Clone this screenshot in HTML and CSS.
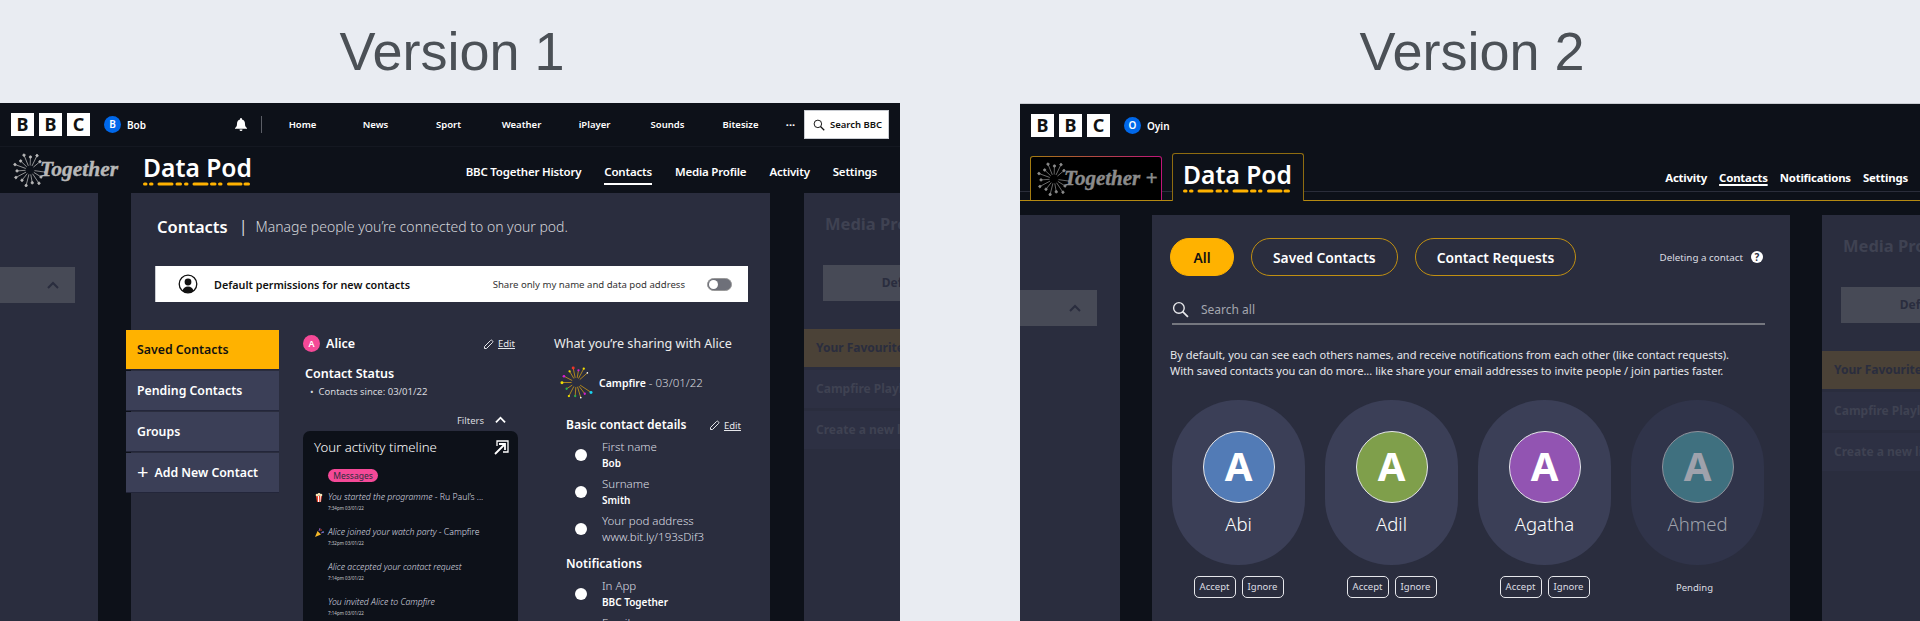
FILE: index.html
```html
<!DOCTYPE html>
<html lang="en">
<head>
<meta charset="utf-8">
<title>BBC Together Data Pod versions</title>
<link rel="stylesheet" href="styles.css">
</head>
<body>
<svg class="defs" width="0" height="0" aria-hidden="true">
  <defs>
    <g id="ray"><line x1="4.5" y1="0" x2="16" y2="0"/><circle cx="16" cy="0" r="1.2"/></g>
    <g id="rayb"><line x1="4.5" y1="0" x2="13" y2="0"/><circle cx="13" cy="0" r="1.2"/></g>
    <g id="burst">
      <use href="#ray" transform="translate(17 17) rotate(8)"/>
      <use href="#rayb" transform="translate(17 17) rotate(32)"/>
      <use href="#ray" transform="translate(17 17) rotate(56)"/>
      <use href="#rayb" transform="translate(17 17) rotate(80)"/>
      <use href="#ray" transform="translate(17 17) rotate(104)"/>
      <use href="#rayb" transform="translate(17 17) rotate(128)"/>
      <use href="#ray" transform="translate(17 17) rotate(152)"/>
      <use href="#rayb" transform="translate(17 17) rotate(176)"/>
      <use href="#ray" transform="translate(17 17) rotate(200)"/>
      <use href="#rayb" transform="translate(17 17) rotate(224)"/>
      <use href="#ray" transform="translate(17 17) rotate(248)"/>
      <use href="#rayb" transform="translate(17 17) rotate(272)"/>
      <use href="#ray" transform="translate(17 17) rotate(296)"/>
      <use href="#rayb" transform="translate(17 17) rotate(320)"/>
    </g>
    <g id="dashes" fill="none" stroke="#ffb200" stroke-width="3" stroke-linecap="round">
      <path d="M1.5 2H3M7.500 2H9M16 2H29M34 2H37.500M42.500 2H44M51 2H64M68.500 2H72M76.500 2H78M85.500 2H98M102 2H105.500"/>
    </g>
    <g id="pencil" fill="none" stroke="currentColor" stroke-width="1">
      <path d="M1.500 8.500 7.500 2.500a1.200 1.200 0 0 1 1.700 0l.3.300a1.200 1.200 0 0 1 0 1.700L3.500 10.500H1.500z"/>
    </g>
    <g id="chev" fill="none" stroke="currentColor" stroke-width="2">
      <path d="M1 8 6 3l5 5"/>
    </g>
    <g id="lens" fill="none" stroke="currentColor" stroke-width="1.300">
      <circle cx="6.500" cy="6.500" r="5"/><path d="M10 10l5 5" stroke-width="1.600"/>
    </g>
  </defs>
</svg>

<div class="stage">
  <section class="version">
    <h1 class="version-title">Version 1</h1>
    <div class="frame">
      <header class="topbar">
        <div class="bbc"><span>B</span><span>B</span><span>C</span></div>
        <div class="user"><span class="user-dot">B</span><span class="user-name">Bob</span></div>
        <div class="global">
          <svg class="bell" viewBox="0 0 12 13" width="12" height="13"><path fill="#fff" d="M6 0a1 1 0 0 1 1 1v.6c2 .5 3 2.100 3 4.100 0 2 .5 3.300 2 4.300v.8H0V10c1.500-1 2-2.300 2-4.300 0-2 1-3.600 3-4.100V1a1 1 0 0 1 1-1zM4.500 11.500h3a1.500 1.500 0 0 1-3 0z"/></svg>
          <span class="sep"></span>
          <nav class="gnav">
            <span>Home</span><span>News</span><span>Sport</span><span>Weather</span><span>iPlayer</span><span>Sounds</span><span>Bitesize</span>
          </nav>
          <span class="more">···</span>
          <div class="search-btn"><svg viewBox="0 0 16 16" width="12" height="12"><use href="#lens"/></svg><span>Search BBC</span></div>
        </div>
      </header>
      <div class="subbar">
        <div class="together">
          <svg class="burst" viewBox="0 0 34 34" width="34" height="34"><use href="#burst"/></svg>
          <span class="together-word">Together</span>
        </div>
        <div class="datapod">
          <span class="datapod-word">Data Pod</span>
          <svg class="dash" viewBox="0 0 107 4" width="107" height="4"><use href="#dashes"/></svg>
        </div>
        <nav class="subnav">
          <span>BBC Together History</span><span class="is-current">Contacts</span><span>Media Profile</span><span>Activity</span><span>Settings</span>
        </nav>
      </div>
      <div class="panels">
        <aside class="side-left">
          <div class="ghost-box"><svg viewBox="0 0 12 11" width="12" height="11"><use href="#chev"/></svg></div>
        </aside>
        <main class="main one">
          <div class="page-head"><strong>Contacts</strong><span class="pipe">|</span><span class="page-sub">Manage people you’re connected to on your pod.</span></div>
          <div class="perm">
            <svg class="perm-icon" viewBox="0 0 20 20" width="20" height="20"><circle cx="10" cy="10" r="8.800" fill="none" stroke="#111" stroke-width="1.300"/><circle cx="10" cy="8" r="3.400" fill="#111"/><path fill="#111" d="M4.500 17c.5-3 2.700-4.500 5.500-4.500s5 1.500 5.500 4.500c-3 2.300-8 2.300-11 0z"/></svg>
            <strong>Default permissions for new contacts</strong>
            <span class="perm-note">Share only my name and data pod address</span>
            <span class="toggle"><i></i></span>
          </div>
          <div class="contact-body">
            <nav class="side-menu">
              <span class="menu-item is-active">Saved Contacts</span>
              <span class="menu-item">Pending Contacts</span>
              <span class="menu-item">Groups</span>
              <span class="menu-item"><b class="plus">+</b>Add New Contact</span>
            </nav>
            <div class="alice">
              <div class="alice-head">
                <span class="alice-dot">A</span><span class="alice-name">Alice</span>
                <span class="edit"><svg viewBox="0 0 11 12" width="11" height="12"><use href="#pencil"/></svg><u>Edit</u></span>
              </div>
              <h3 class="status-title">Contact Status</h3>
              <p class="status-item">•&nbsp; Contacts since: 03/01/22</p>
              <div class="filters"><span>Filters</span><svg viewBox="0 0 12 11" width="11" height="10"><use href="#chev"/></svg></div>
              <div class="timeline">
                <div class="timeline-head"><span>Your activity timeline</span>
                  <svg viewBox="0 0 15 15" width="15" height="15" fill="none" stroke="#fff" stroke-width="1.300"><path d="M3 6V1h11v11H9"/><path d="M1 14 10 5M5 4h6v6" stroke-width="1.800"/></svg>
                </div>
                <span class="pill-msg">Messages</span>
                <div class="entry">
                  <svg class="entry-icon" viewBox="0 0 8 9" width="8" height="9"><path fill="#e8452e" d="M1 3h6L6 9H2z"/><path fill="#fff" d="M3 3h1v6H3zM5 3h.8L5.400 9H4.800z"/><circle cx="2" cy="2" r="1.300" fill="#f7e6b5"/><circle cx="4" cy="1.500" r="1.400" fill="#f7e6b5"/><circle cx="6" cy="2" r="1.300" fill="#f7e6b5"/></svg>
                  <p><i>You started the programme</i> - Ru Paul’s ...</p><small>7:34pm 03/01/22</small>
                </div>
                <div class="entry">
                  <svg class="entry-icon" viewBox="0 0 9 9" width="9" height="9"><path fill="#f4b829" d="M0 9l2.500-6 3.500 3.500z"/><circle cx="6" cy="2" r=".8" fill="#e8452e"/><circle cx="8" cy="4" r=".8" fill="#4aa3df"/><path stroke="#9a6cd1" stroke-width=".8" d="M4 3l1-3M6 5l3-1"/></svg>
                  <p><i>Alice joined your watch party</i> - Campfire</p><small>7:32pm 03/01/22</small>
                </div>
                <div class="entry"><p><i>Alice accepted your contact request</i></p><small>7:14pm 03/01/22</small></div>
                <div class="entry entry-tight"><p><i>You invited Alice to Campfire</i></p><small>7:14pm 03/01/22</small></div>
              </div>
            </div>
            <div class="sharing">
              <h3 class="sharing-title">What you’re sharing with Alice</h3>
              <div class="campfire">
                <svg viewBox="88 137 100 100" width="33" height="33" fill="none" stroke="#c8971a" stroke-width="2.500">
                  <path d="M134 173 128 143M130 175 117 153M140 173 144 150M144 175 160 145M148 178 171 158M125 181 100 168M123 187H94M125 195 108 206M130 199 115 228M136 201 134 228M141 200 151 233M145.500 198 163 221M149 195 182 217"/>
                  <g stroke="none"><circle cx="128" cy="143" r="4.500" fill="#f0342a"/><circle cx="117" cy="153" r="3.500" fill="#f0e000"/><circle cx="144" cy="150" r="3.500" fill="#d81fd0"/><circle cx="160" cy="145" r="3.500" fill="#f0e000"/><circle cx="171" cy="158" r="2.500" fill="#fff"/><circle cx="100" cy="168" r="4" fill="#d81fd0"/><circle cx="94" cy="188" r="4.500" fill="#f0e000"/><circle cx="108" cy="206" r="3.500" fill="#2bb24c"/><circle cx="115" cy="228" r="3.500" fill="#f0e000"/><circle cx="134" cy="228" r="3.500" fill="#2bb24c"/><circle cx="151" cy="233" r="2.500" fill="#fff"/><circle cx="163" cy="221" r="3.500" fill="#d81fd0"/><circle cx="182" cy="217" r="4.500" fill="#19d3f0"/></g>
                </svg>
                <p><strong>Campfire</strong> - 03/01/22</p>
              </div>
              <div class="detail-head"><h4>Basic contact details</h4><span class="edit"><svg viewBox="0 0 11 12" width="11" height="12"><use href="#pencil"/></svg><u>Edit</u></span></div>
              <div class="detail"><span class="radio"></span><div><p>First name</p><b>Bob</b></div></div>
              <div class="detail"><span class="radio"></span><div><p>Surname</p><b>Smith</b></div></div>
              <div class="detail"><span class="radio"></span><div><p>Your pod address</p><p>www.bit.ly/193sDif3</p></div></div>
              <h4 class="notif-title">Notifications</h4>
              <div class="detail"><span class="radio"></span><div><p>In App</p><b>BBC Together</b></div></div>
              <div class="detail"><span class="radio"></span><div><p>Email</p><b>&nbsp;</b></div></div>
            </div>
          </div>
        </main>
        <aside class="side-right">
          <h2 class="ghost-title">Media Profile</h2>
          <div class="ghost-default">Default</div>
          <div class="ghost-row is-strip">Your Favourites</div>
          <div class="ghost-row">Campfire Playlist</div>
          <div class="ghost-row">Create a new list</div>
        </aside>
      </div>
    </div>
  </section>

  <section class="version">
    <h1 class="version-title">Version 2</h1>
    <div class="frame frame-two">
      <header class="topbar">
        <div class="bbc"><span>B</span><span>B</span><span>C</span></div>
        <div class="user"><span class="user-dot">O</span><span class="user-name">Oyin</span></div>
      </header>
      <div class="tabbar">
        <div class="tab-together">
          <svg class="burst" viewBox="0 0 34 34" width="34" height="34"><use href="#burst"/></svg>
          <span class="together-word">Together +</span>
        </div>
        <div class="tab-datapod">
          <span class="datapod-word">Data Pod</span>
          <svg class="dash" viewBox="0 0 107 4" width="107" height="4"><use href="#dashes"/></svg>
        </div>
        <nav class="tabnav">
          <span>Activity</span><span class="is-current">Contacts</span><span>Notifications</span><span>Settings</span>
        </nav>
      </div>
      <div class="panels panels-two">
        <aside class="side-left">
          <div class="ghost-box"><svg viewBox="0 0 12 11" width="12" height="11"><use href="#chev"/></svg></div>
        </aside>
        <main class="main two">
          <div class="pills">
            <span class="pill is-on">All</span>
            <span class="pill">Saved Contacts</span>
            <span class="pill">Contact Requests</span>
            <span class="help">Deleting a contact<i>?</i></span>
          </div>
          <div class="searchline">
            <svg viewBox="0 0 16 16" width="17" height="17"><use href="#lens"/></svg>
            <span>Search all</span>
          </div>
          <p class="intro">By default, you can see each others names, and receive notifications from each other (like contact requests).<br>With saved contacts you can do more... like share your email addresses to invite people / join parties faster.</p>
          <div class="people">
            <div class="person">
              <div class="person-card"><span class="face blue">A</span><span class="person-name">Abi</span></div>
              <div class="actions"><span>Accept</span><span>Ignore</span></div>
            </div>
            <div class="person">
              <div class="person-card"><span class="face green">A</span><span class="person-name">Adil</span></div>
              <div class="actions"><span>Accept</span><span>Ignore</span></div>
            </div>
            <div class="person">
              <div class="person-card"><span class="face purple">A</span><span class="person-name">Agatha</span></div>
              <div class="actions"><span>Accept</span><span>Ignore</span></div>
            </div>
            <div class="person is-pending">
              <div class="person-card"><span class="face teal">A</span><span class="person-name">Ahmed</span></div>
              <div class="actions"><em>Pending</em></div>
            </div>
          </div>
        </main>
        <aside class="side-right">
          <h2 class="ghost-title">Media Profile</h2>
          <div class="ghost-default">Default</div>
          <div class="ghost-row is-strip">Your Favourites</div>
          <div class="ghost-row">Campfire Playlist</div>
          <div class="ghost-row">Create a new list</div>
        </aside>
      </div>
    </div>
  </section>
</div>
</body>
</html>
```

FILE: styles.css
```css
* { box-sizing: border-box; }
html, body { margin: 0; padding: 0; height: 621px; overflow: hidden; }
body { background: #e9ecf2; font-family: "Noto Sans", "Open Sans", sans-serif; color: #fff; }
h1, h2, h3, h4, p { margin: 0; font-weight: inherit; }
.defs { display: block; height: 0; }
#ray, #rayb { stroke: currentColor; stroke-width: .7; fill: currentColor; }

.stage { display: flex; gap: 120px; height: 621px; }
.version { width: 900px; display: flex; flex-direction: column; }
.version-title { height: 103px; text-align: center; font: 400 54px/103px "Liberation Sans", sans-serif; color: #4b5056; padding-left: 4px; }
.frame { width: 900px; height: 518px; background: #0d1119; overflow: hidden; display: flex; flex-direction: column; }
.frame-two { border-top: 1px solid #c9ccd2; }

/* top bar */
.topbar { height: 44px; flex: none; display: flex; align-items: center; padding: 0 11px; border-bottom: 1px solid #141821; }
.frame-two .topbar { height: 43px; border-bottom: 0; }
.bbc { display: flex; gap: 5px; }
.bbc span { width: 23px; height: 23px; background: #fff; color: #111; font: 700 18px/23px "Noto Sans", sans-serif; text-align: center; }
.user { display: flex; align-items: center; gap: 6px; margin-left: 14px; }
.user-dot { width: 17px; height: 17px; border-radius: 50%; background: #0068ea; font-size: 10px; font-weight: 600; line-height: 17px; text-align: center; }
.user-name { font-size: 10px; font-weight: 600; }
.global { margin-left: auto; display: flex; align-items: center; }
.bell { margin-right: 14px; }
.sep { width: 1px; height: 17px; background: #5b5e66; margin-right: 4px; }
.gnav { display: flex; }
.gnav span { width: 73px; text-align: center; font-size: 9.500px; font-weight: 600; }
.more { width: 27px; text-align: center; font-size: 11px; font-weight: 700; }
.search-btn { width: 85px; height: 29px; background: #fff; border: 1px solid #c9ccd2; color: #111; display: flex; align-items: center; gap: 5px; padding-left: 8px; font-size: 9.500px; font-weight: 600; white-space: nowrap; }

/* version 1 sub bar */
.subbar { height: 46px; flex: none; display: flex; padding-left: 13px; }
.together { width: 130px; display: flex; align-items: center; }
.burst { flex: none; margin-right: -7px; color: #b8b8b8; }
.together-word { font: italic 700 21.500px/1 "Liberation Serif", serif; color: #b8b8b8; white-space: nowrap; -webkit-text-stroke: .4px currentColor; }
.datapod { display: flex; flex-direction: column; padding-top: 6px; }
.datapod-word { font-size: 24.600px; font-weight: 600; line-height: 30px; white-space: nowrap; width: 107px; }
.dash { display: block; margin-top: -1px; }
.subnav { margin-left: auto; padding: 16px 23px 0 0; display: flex; gap: 23px; align-items: flex-start; }
.subnav span { font-size: 11.500px; letter-spacing: -.2px; font-weight: 600; line-height: 18px; padding-bottom: 2px; white-space: nowrap; }
.subnav .is-current { border-bottom: 2px solid #fff; }

/* panels */
.panels { flex: 1; display: flex; min-height: 0; }
.panels-two { margin-top: 14px; }
.side-left { width: 98px; flex: none; background: #2a2d3e; padding-top: 74px; }
.ghost-box { width: 75px; height: 36px; background: #474a56; color: #2a2d3e; display: flex; align-items: center; justify-content: flex-end; padding-right: 16px; }
.main { background: #2a2d3e; flex: none; width: 639px; margin: 0 34px 0 33px; }
.side-right { flex: 1; min-width: 0; background: #2a2d3e; overflow: hidden; padding-top: 20px; }
.panels-two .side-left { width: 100px; padding-top: 75px; }
.panels-two .ghost-box { width: 77px; }
.panels-two .main { width: 638px; margin: 0 32px; }
.ghost-title { font-size: 16.500px; font-weight: 700; line-height: 22px; color: #3f4252; padding-left: 21px; white-space: nowrap; }
.ghost-default { margin: 30px 0 28px 19px; width: 162px; height: 36px; line-height: 36px; background: #474a56; color: #2a2d3e; text-align: center; font-size: 12px; font-weight: 700; }
.ghost-row { height: 38px; line-height: 38px; margin-bottom: 3px; padding-left: 12px; background: #2d3043; color: #3f4252; font-size: 12px; font-weight: 700; white-space: nowrap; }
.ghost-row.is-strip { background: #4b4237; color: #2a2d3e; }

/* version 1 main */
.one { padding: 21px 0 0 24px; }
.page-head { display: flex; align-items: center; height: 24px; padding-left: 2px; }
.page-head strong { font-size: 16.500px; font-weight: 600; }
.pipe { margin: 0 8px 0 11px; font-size: 16px; color: #d8d9de; }
.page-sub { font-size: 14px; font-weight: 300; color: #d4d5da; white-space: nowrap; }
.perm { margin-top: 28px; width: 593px; height: 36px; background: #fff; color: #111; display: flex; align-items: center; padding-left: 22px; border-left: 1px solid #c9ccd2; }
.perm-icon { flex: none; margin-right: 16px; }
.perm strong { font-size: 10.800px; font-weight: 600; white-space: nowrap; }
.perm-note { margin-left: auto; font-size: 9.600px; color: #333; white-space: nowrap; }
.toggle { margin: 0 16px 0 22px; width: 25px; height: 13px; border-radius: 7px; background: #6e7079; padding: 1px; border: 1px solid #999; display: block; }
.toggle i { display: block; width: 9px; height: 9px; background: #fff; border-radius: 50%; }
.contact-body { display: flex; margin: 28px 0 0 -29px; }
.side-menu { width: 153px; flex: none; display: flex; flex-direction: column; gap: 2.500px; }
.menu-item { height: 38.500px; background: #3b3f57; display: flex; align-items: center; padding-left: 11px; font-size: 12.300px; font-weight: 600; white-space: nowrap; box-shadow: 0 1px 0 #23263a; }
.menu-item.is-active { background: #ffb200; color: #111; }
.plus { font-size: 20px; font-weight: 400; line-height: 1; margin-right: 6px; }
.alice { width: 215px; flex: none; margin-left: 24px; padding-top: 5px; }
.alice-head { height: 17px; display: flex; align-items: center; }
.alice-dot { width: 17px; height: 17px; border-radius: 50%; background: #f54997; font-size: 9px; font-weight: 600; line-height: 17px; text-align: center; margin-right: 6px; }
.alice-name { font-size: 12.500px; font-weight: 600; }
.edit { margin-left: auto; display: flex; align-items: center; gap: 4px; font-size: 9.500px; color: #e6e7eb; margin-right: 3px; }
.status-title { margin: 13px 0 0 2px; font-size: 12.500px; font-weight: 600; line-height: 18px; }
.status-item { margin: 2px 0 0 7px; font-size: 9.500px; line-height: 14px; color: #d8d9de; white-space: nowrap; }
.filters { margin-top: 14px; height: 14px; display: flex; justify-content: flex-end; align-items: center; gap: 11px; padding-right: 12px; font-size: 9.500px; color: #d8d9de; }
.filters svg { color: #fff; }
.timeline { margin-top: 4px; height: 200px; background: #0d1119; border-radius: 7px 7px 0 0; padding-top: 6px; }
.timeline-head { height: 20px; display: flex; align-items: center; justify-content: space-between; padding: 0 9px 0 11px; font-size: 13.200px; font-weight: 300; }
.pill-msg { display: block; margin: 12px 0 2px 25px; width: 50px; height: 13px; border-radius: 7px; background: #f54997; color: #2a2d3e; font-size: 8.500px; line-height: 13px; text-align: center; }
.entry { position: relative; height: 35px; padding: 6px 0 0 25px; }
.entry-tight { height: 32px; }
.entry-icon { position: absolute; left: 12px; top: 9px; }
.entry p { font-size: 8.700px; line-height: 14px; color: #dcdde2; font-weight: 300; white-space: nowrap; }
.entry small { display: block; font-size: 4.500px; line-height: 8px; color: #c8c9ce; }
.sharing { width: 190px; flex: none; margin-left: 36px; padding-top: 5px; }
.sharing-title { font-size: 12.600px; font-weight: 400; line-height: 18px; white-space: nowrap; color: #eceded; }
.campfire { margin: 13px 0 0 6px; display: flex; align-items: center; gap: 6px; font-size: 11.500px; font-weight: 300; color: #d8d9de; white-space: nowrap; }
.campfire strong { font-size: 10.500px; font-weight: 600; color: #fff; }
.detail-head { margin: 17px 0 0 12px; width: 175px; display: flex; align-items: center; height: 18px; }
.detail-head h4, .notif-title { font-size: 12.100px; font-weight: 600; white-space: nowrap; line-height: 18px; }
.detail-head .edit { margin-right: 0; }
.notif-title { margin: 10px 0 0 12px; }
.detail { display: flex; align-items: center; gap: 15px; margin: 5px 0 0 21px; }
.detail p { font-size: 11.500px; font-weight: 300; line-height: 16px; color: #dcdde2; white-space: nowrap; }
.detail b { display: block; font-size: 10px; font-weight: 600; line-height: 16px; white-space: nowrap; }
.radio { width: 12px; height: 12px; border-radius: 50%; background: #fff; flex: none; }

/* version 2 tab bar */
.tabbar { height: 54px; flex: none; display: flex; align-items: flex-end; padding-left: 10px; border-bottom: 1px solid #b58a12; background: linear-gradient(#0d1119 44px, #2a2d3a 44px, #2a2d3a 45px, #0d1119 45px); }
.tab-together { width: 132px; height: 44px; margin-right: 10px; display: flex; align-items: center; padding-left: 6px; border: 1px solid transparent; border-bottom: 0; border-radius: 3px 3px 0 0; background: linear-gradient(#000, #000) padding-box, linear-gradient(90deg, #a47c10, #c0157a) border-box; }
.tab-together .burst, .tab-together .together-word { color: #8b8b8b; }
.tab-together .together-word { font-size: 21px; }
.tab-datapod { width: 132px; height: 48px; margin-bottom: -1px; padding: 6px 0 0 10px; border: 1px solid #8e6c10; border-bottom: 0; border-radius: 3px 3px 0 0; background: #0d1119; display: flex; flex-direction: column; }
.tab-datapod .dash { margin-top: -1px; }
.tabnav { margin-left: auto; padding-right: 12px; display: flex; gap: 12px; align-self: flex-start; margin-top: 22px; }
.tabnav span { font-size: 11.400px; letter-spacing: -.2px; font-weight: 700; line-height: 18px; white-space: nowrap; }
.tabnav .is-current { text-decoration: underline; text-decoration-thickness: 1.500px; text-underline-offset: 2px; }

/* version 2 main */
.two { padding: 23px 0 0 18px; }
.pills { display: flex; align-items: center; gap: 17px; padding-right: 27px; }
.pill { height: 38px; padding: 0 21px; border-radius: 19px; border: 1px solid #c08f12; display: flex; align-items: center; font-size: 13.800px; font-weight: 600; white-space: nowrap; }
.pill.is-on { background: #ffb200; border-color: #ffb200; color: #111; width: 64px; justify-content: center; padding: 0; }
.help { margin-left: auto; display: flex; align-items: center; gap: 8px; font-size: 9.800px; color: #dcdde2; white-space: nowrap; }
.help i { width: 12px; height: 12px; border-radius: 50%; background: #fff; color: #2a2d3e; font-size: 10px; font-weight: 700; font-style: normal; line-height: 12px; text-align: center; }
.searchline { margin: 20px 0 0 2px; width: 593px; height: 29px; display: flex; align-items: center; gap: 12px; border-bottom: 2px solid #75777f; font-size: 12px; color: #a4a6ae; }
.searchline svg { color: #e8e9ec; }
.intro { margin-top: 22px; font-size: 11.050px; line-height: 15.500px; color: #e6e7eb; white-space: nowrap; }
.people { display: flex; gap: 20px; margin: 22px 0 0 2px; }
.person { width: 133px; display: flex; flex-direction: column; align-items: center; }
.person-card { width: 133px; height: 165px; border-radius: 66px; background: #3b3f57; padding-top: 31px; display: flex; flex-direction: column; align-items: center; }
.face { width: 72px; height: 72px; border-radius: 50%; border: 1.500px solid #e6e7eb; display: block; text-align: center; font-size: 40px; font-weight: 700; line-height: 68px; }
.blue { background: #527bb6; }
.green { background: #7f9f4b; }
.purple { background: #9254b2; }
.teal { background: #3f707f; }
.person-name { margin-top: 9px; font-size: 18.500px; line-height: 24px; font-weight: 300; }
.actions { margin-top: 11px; height: 22px; display: flex; gap: 6px; align-items: center; }
.actions span { width: 42px; height: 22px; border: 1.500px solid #e6e7eb; border-radius: 5px; font-size: 9.500px; line-height: 19px; text-align: center; color: #dcdde2; }
.actions em { font-style: normal; font-size: 9.500px; color: #dcdde2; margin-right: 6px; }
.is-pending .person-card { background: #30344a; }
.is-pending .face { border-color: #8f929c; color: #9fa2ac; }
.is-pending .person-name { color: #9fa2ac; }
```
